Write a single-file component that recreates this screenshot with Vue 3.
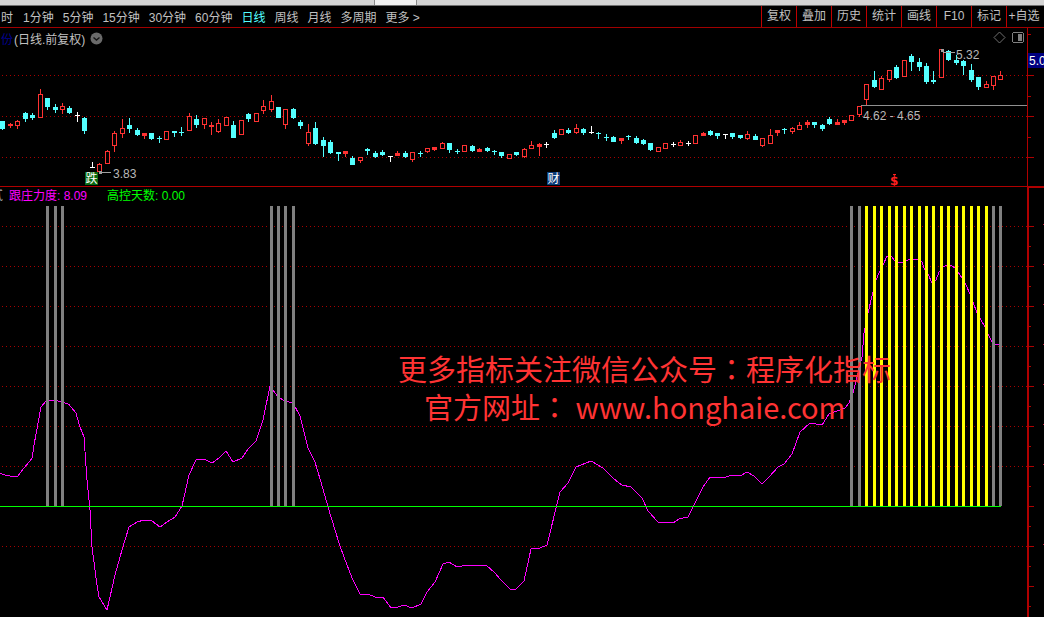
<template>
  <div class="screen">
    <div class="strip">
      <span class="strip-tab"></span>
    </div>
    <div class="toolbar">
      <div class="periods">
        <span v-for="p in periods" :key="p" class="period" :class="{ active: p === '日线' }">{{ p }}</span>
      </div>
      <div class="tools">
        <span v-for="t in tools" :key="t" class="tool">{{ t }}</span>
      </div>
    </div>
    <div class="charts">
      <svg class="chart" viewBox="0 28 1044 589" width="1044" height="589" shape-rendering="crispEdges">
        <defs>
          <pattern id="dots" x="2" y="0" width="4" height="1" patternUnits="userSpaceOnUse">
            <rect x="0" y="0" width="1" height="1" fill="#a80000" />
          </pattern>
        </defs>

        <!-- grid -->
        <rect v-for="y in upperGrid" :key="'u' + y" x="0" :y="y" width="1027" height="1" fill="url(#dots)" />
        <rect v-for="y in lowerGrid" :key="'l' + y" x="0" :y="y" width="1027" height="1" fill="url(#dots)" />

        <!-- candles -->
        <g v-for="(c, i) in candles" :key="i">
          <rect :x="c[0]" :y="c[4]" width="1" :height="c[5] - c[4] + 1" :fill="colors[c[1]]" />
          <rect v-if="c[1] === 'r' && c[3] - c[2] > 2" :x="c[0] - 1.5" :y="c[2] + 0.5" width="4" :height="c[3] - c[2]" fill="#000" stroke="#ff3232" />
          <rect v-else :x="c[0] - 2" :y="c[2]" width="5" :height="c[3] - c[2] + 1" :fill="colors[c[1]]" />
        </g>

        <!-- price marks -->
        <rect x="861" y="105" width="166" height="1" fill="#909090" />
        <rect x="101" y="172" width="10" height="1" fill="#a0a0a0" />
        <rect x="99" y="171" width="3" height="3" fill="#a0a0a0" />
        <rect x="943" y="52" width="12" height="1" fill="#a0a0a0" />
        <rect x="941" y="49" width="3" height="3" fill="#a0a0a0" />
        <text x="113" y="178" class="price">3.83</text>
        <text x="956" y="59" class="price">5.32</text>
        <text x="863" y="120" class="price">4.62 - 4.65</text>

        <!-- event badges -->
        <rect x="85" y="172" width="13" height="13" fill="#0a6a12" />
        <text x="85.5" y="183" class="badge">跌</text>
        <rect x="547" y="172" width="13" height="13" fill="#0b3c78" />
        <text x="547.5" y="183" class="badge">财</text>
        <text x="890" y="185" class="dollar">$</text>
        <rect x="893" y="174" width="3" height="1" fill="#ff2020" />

        <!-- corner icons -->
        <polygon points="999.5,32 1005,37.5 999.5,43 994,37.5" fill="none" stroke="#707070" shape-rendering="auto" />
        <rect x="1012.5" y="32.5" width="11" height="10" rx="2" fill="none" stroke="#808080" />
        <rect x="1018" y="34" width="4" height="7" fill="#808080" />

        <!-- indicator line, the bars sit on it -->
        <polyline :points="linePoints" fill="none" stroke="#ff00ff" />
        <rect v-for="x in grayBars" :key="'g' + x" :x="x" y="206" width="3" height="300" fill="#808080" />
        <rect v-for="x in yellowBars" :key="'y' + x" :x="x" y="206" width="3" height="300" fill="#ffff00" />
        <rect x="0" y="506" width="1001" height="1" fill="#00ff00" />

        <!-- frame and axis -->
        <rect x="0" y="186" width="1044" height="1" fill="#b00000" />
        <rect x="1028" y="187" width="16" height="1" fill="#b00000" />
        <rect x="1027" y="28" width="1" height="159" fill="#b00000" />
        <rect x="1027" y="187" width="2" height="430" fill="#b00000" />
        <rect v-for="y in majorTicks" :key="'t' + y" x="1028" :y="y" width="6" height="1" fill="#b00000" />
        <rect v-for="y in minorTicks" :key="'m' + y" x="1028" :y="y" width="3" height="1" fill="#b00000" />
        <rect v-for="y in lowerGrid" :key="'d' + y" x="1043" :y="y - 2" width="1" height="1" fill="#c02040" />

        <!-- current price tag -->
        <rect x="1028" y="53" width="16" height="15" fill="#000080" />
        <text x="1029" y="65" class="tag">5.00</text>
      </svg>

      <div class="title">
        <span class="code">份</span>
        <span>(日线.前复权)</span>
        <svg class="chevron" width="13" height="13" viewBox="0 0 13 13">
          <circle cx="6.5" cy="6.5" r="6" fill="#6a6a6a" />
          <path d="M3.5 5.5 L6.5 8 L9.5 5.5" fill="none" stroke="#151515" stroke-width="1.4" />
        </svg>
      </div>

      <div class="legend">
        <span class="cut">贰</span>
        <span class="magenta">跟庄力度: 8.09</span>
        <span class="green">高控天数: 0.00</span>
      </div>

      <div class="watermark">
        <div class="wm-one">更多指标关注微信公众号<span class="colon">：</span>程序化指标</div>
        <div class="wm-two">官方网址<span class="colon">：</span> www.honghaie.com</div>
      </div>
    </div>
  </div>
</template>

<script setup>
const periods = ['时', '1分钟', '5分钟', '15分钟', '30分钟', '60分钟', '日线', '周线', '月线', '多周期', '更多 >']
const tools = ['复权', '叠加', '历史', '统计', '画线', 'F10', '标记', '+自选']

const colors = { r: '#ff3232', c: '#54ffff', w: '#ffffff' }

const upperGrid = [75, 116, 157]
const lowerGrid = [226, 266, 306, 346, 386, 426, 466, 546]
const majorTicks = [75, 116, 157, 226, 266, 306, 346, 386, 426, 466, 506, 546, 586]
const minorTicks = [34, 55, 96, 137, 246, 286, 326, 366, 406, 446, 486, 526, 566, 606]

const grayBars = [46, 54, 61, 270, 277, 284, 292, 850, 858, 992, 999]
const yellowBars = [865, 873, 880, 888, 895, 903, 910, 918, 925, 932, 940, 947, 955, 962, 970, 977, 985]

// x, kind, body top, body bottom, high, low
const candles = [
  [2, 'c', 121, 128, 121, 129], [10, 'r', 124, 125, 123, 127], [17, 'r', 121, 125, 120, 128],
  [25, 'c', 113, 118, 112, 121], [32, 'c', 115, 117, 113, 119], [40, 'r', 94, 117, 89, 117],
  [47, 'c', 98, 106, 98, 109], [55, 'c', 107, 109, 104, 112], [62, 'r', 106, 109, 103, 113],
  [69, 'c', 108, 112, 106, 113], [77, 'w', 115, 115, 112, 121], [84, 'c', 118, 130, 117, 133],
  [92, 'w', 167, 167, 162, 167], [99, 'r', 164, 171, 163, 171], [107, 'r', 151, 163, 150, 163],
  [114, 'r', 133, 145, 131, 151], [122, 'r', 128, 133, 119, 137], [129, 'c', 125, 128, 118, 132],
  [137, 'c', 130, 134, 128, 135], [144, 'r', 133, 135, 133, 138], [151, 'c', 133, 138, 133, 139],
  [159, 'c', 138, 138, 136, 142], [166, 'r', 131, 139, 131, 139], [174, 'c', 131, 132, 131, 136],
  [181, 'c', 132, 132, 127, 135], [189, 'r', 116, 130, 113, 130], [196, 'c', 119, 124, 115, 127],
  [204, 'r', 118, 124, 118, 128], [211, 'r', 125, 126, 122, 134], [218, 'r', 123, 131, 119, 132],
  [226, 'r', 117, 125, 117, 125], [233, 'c', 125, 137, 121, 137], [241, 'r', 120, 134, 120, 134],
  [248, 'c', 114, 118, 113, 121], [256, 'r', 113, 121, 113, 121], [263, 'r', 106, 110, 100, 113],
  [271, 'r', 101, 109, 95, 111], [278, 'c', 107, 117, 107, 117], [285, 'r', 109, 124, 109, 128],
  [293, 'c', 109, 117, 108, 118], [300, 'c', 122, 125, 120, 128], [308, 'r', 132, 143, 124, 145],
  [315, 'c', 128, 143, 122, 144], [323, 'c', 140, 145, 137, 156], [330, 'c', 142, 152, 140, 153],
  [338, 'c', 152, 153, 152, 160], [345, 'r', 151, 153, 151, 156], [352, 'c', 158, 164, 156, 164],
  [360, 'r', 157, 160, 157, 162], [367, 'c', 149, 150, 148, 154], [375, 'c', 153, 156, 151, 157],
  [382, 'c', 152, 154, 150, 155], [390, 'w', 156, 156, 156, 161], [397, 'r', 153, 155, 151, 155],
  [405, 'c', 153, 156, 151, 157], [412, 'r', 152, 159, 152, 161], [420, 'c', 153, 153, 151, 156],
  [427, 'r', 148, 151, 148, 152], [434, 'r', 147, 149, 147, 150], [442, 'r', 143, 148, 142, 148],
  [449, 'c', 143, 149, 143, 152], [457, 'c', 151, 151, 149, 153], [464, 'r', 145, 151, 145, 151],
  [472, 'c', 146, 150, 145, 151], [479, 'r', 149, 151, 148, 151], [487, 'c', 148, 150, 147, 151],
  [494, 'c', 151, 151, 150, 154], [501, 'c', 152, 155, 152, 157], [509, 'r', 154, 158, 154, 158],
  [516, 'c', 152, 154, 152, 155], [524, 'r', 149, 156, 148, 157], [531, 'r', 145, 148, 141, 148],
  [539, 'r', 144, 146, 143, 155], [546, 'w', 144, 144, 142, 147], [554, 'c', 133, 137, 130, 138],
  [561, 'r', 129, 134, 129, 134], [568, 'c', 130, 132, 128, 133], [576, 'r', 128, 132, 124, 133],
  [583, 'c', 129, 132, 128, 134], [591, 'w', 132, 132, 126, 133], [598, 'c', 133, 133, 132, 138],
  [606, 'c', 137, 137, 134, 140], [613, 'c', 137, 141, 136, 141], [621, 'r', 138, 140, 138, 143],
  [628, 'c', 136, 136, 135, 139], [636, 'c', 138, 142, 136, 143], [643, 'c', 140, 143, 139, 144],
  [650, 'c', 143, 149, 143, 150], [658, 'r', 147, 151, 147, 151], [665, 'r', 143, 148, 143, 148],
  [673, 'w', 144, 144, 142, 146], [680, 'r', 142, 145, 140, 145], [688, 'w', 143, 143, 141, 145],
  [695, 'r', 135, 143, 135, 143], [703, 'r', 133, 135, 132, 135], [710, 'c', 131, 134, 130, 135],
  [717, 'c', 133, 135, 133, 138], [725, 'w', 134, 134, 134, 138], [732, 'c', 133, 136, 133, 138],
  [740, 'c', 135, 137, 135, 138], [747, 'r', 134, 138, 131, 139], [755, 'c', 136, 139, 134, 139],
  [762, 'r', 138, 145, 138, 146], [770, 'r', 135, 143, 129, 143], [777, 'r', 130, 132, 130, 135],
  [784, 'c', 129, 129, 128, 133], [792, 'r', 128, 131, 127, 133], [799, 'r', 125, 129, 122, 129],
  [807, 'r', 122, 124, 120, 127], [814, 'c', 122, 124, 122, 127], [822, 'c', 125, 128, 124, 130],
  [829, 'c', 119, 123, 117, 124], [837, 'r', 122, 124, 119, 124], [844, 'r', 120, 122, 120, 124],
  [851, 'r', 115, 120, 115, 120], [859, 'r', 106, 114, 106, 116], [866, 'r', 84, 99, 84, 104],
  [874, 'c', 80, 86, 71, 87], [881, 'r', 78, 89, 76, 89], [889, 'r', 70, 79, 70, 81],
  [896, 'c', 67, 77, 65, 78], [904, 'r', 60, 76, 60, 76], [911, 'c', 56, 61, 54, 70],
  [919, 'c', 62, 66, 58, 70], [926, 'c', 66, 81, 63, 83], [933, 'c', 80, 81, 71, 83],
  [941, 'r', 49, 77, 49, 77], [948, 'c', 51, 59, 50, 60], [956, 'c', 60, 62, 55, 64],
  [963, 'c', 61, 65, 60, 74], [971, 'c', 70, 79, 64, 81], [978, 'c', 77, 86, 77, 89],
  [986, 'r', 84, 87, 81, 87], [993, 'r', 76, 85, 76, 89], [1000, 'r', 75, 79, 71, 79]
]

const linePoints = [
  [0, 473.5], [5, 475], [12, 476.5], [17, 477], [24, 468], [32, 458.5], [34, 445], [41, 407], [46, 401], [50, 400],
  [58, 401], [62, 402], [69, 404.5], [76, 413], [80, 427], [84, 437], [87, 480], [90, 510], [92, 547], [97, 585],
  [99, 597], [107, 610], [115, 575], [122, 550], [129, 527], [137, 522], [144, 520], [152, 521], [160, 527], [167, 522],
  [175, 517], [182, 506], [189, 475], [196, 460], [204, 459], [212, 463], [219, 458], [226, 451], [233, 462], [242, 458],
  [248, 449], [256, 441], [263, 420], [270, 386], [278, 397], [285, 401], [293, 403], [300, 416], [308, 448], [315, 462],
  [323, 489], [328, 507], [339, 543], [344, 557], [352, 578], [360, 594], [368, 594], [375, 597], [383, 597], [391, 608],
  [398, 607], [404, 605], [412, 608], [421, 604], [427, 592], [435, 582], [443, 564], [449, 562], [457, 567], [468, 565],
  [487, 566], [494, 572], [501, 580], [510, 589], [515, 590], [524, 581], [531, 549], [540, 548], [547, 545], [560, 492],
  [568, 483], [576, 467], [591, 461], [603, 468], [614, 479], [622, 485], [631, 487], [642, 498], [648, 511], [658, 522],
  [673, 523], [679, 519], [688, 517], [703, 487], [710, 477], [726, 477], [732, 475], [740, 476], [747, 472], [754, 476],
  [762, 484], [769, 477], [778, 467], [784, 464], [792, 454], [800, 432], [810, 423], [822, 425], [829, 414], [845, 408],
  [849, 403], [853, 393], [862, 357], [864, 333], [868, 313], [873, 292], [876, 280], [879, 273], [883, 265], [887, 256],
  [891, 256], [895, 261], [898, 262], [903, 262], [908, 260], [917, 259], [922, 262], [924, 268], [928, 274], [932, 283],
  [936, 280], [939, 272], [943, 267], [947, 265], [951, 265], [955, 268], [958, 272], [962, 278], [966, 285], [970, 294],
  [973, 302], [977, 313], [981, 320], [985, 327], [988, 334], [992, 342], [995, 344], [999, 344]
].map(p => p.join(',')).join(' ')
</script>

<style scoped>
.screen { width:1044px; height:617px; background:#000; overflow:hidden; display:flex; flex-direction:column; font-family:"Liberation Sans","Noto Sans CJK SC",sans-serif; font-size:12px; color:#c0c0c0; }
.strip { height:5px; background:#d4d4d4; border-bottom:1px solid #707070; display:flex; justify-content:flex-end; }
.strip-tab { width:41px; height:5px; margin-right:627px; background:#f0f0f0; border-left:1px solid #8a8a8a; border-right:1px solid #8a8a8a; }
.toolbar { height:21px; display:flex; justify-content:space-between; border-bottom:1px solid #a00000; }
.periods { display:flex; align-items:center; gap:9px; padding-left:1px; }
.period { white-space:nowrap; }
.period:first-child { margin-right:1px; }
.period.active { color:#54ffff; }
.tools { display:flex; padding-right:3px; }
.tool { width:35px; box-sizing:border-box; border-left:1px solid #c00000; text-align:center; line-height:21px; white-space:nowrap; }
.charts { position:relative; flex:1; }
.chart { display:block; }
.price { font-family:"Liberation Sans",sans-serif; font-size:12px; fill:#b8b8b8; }
.badge { font-family:"Noto Sans CJK SC",sans-serif; font-size:12px; fill:#fff; }
.dollar { font-family:"DejaVu Sans",sans-serif; font-size:12px; font-weight:bold; fill:#ff2020; }
.tag { font-family:"Liberation Sans",sans-serif; font-size:12px; fill:#fff; }
.title { position:absolute; left:1px; top:3px; display:flex; align-items:center; height:14px; white-space:nowrap; }
.code { color:#000090; margin-right:1px; }
.chevron { margin-left:5px; }
.legend { position:absolute; left:-9px; top:159px; display:flex; white-space:nowrap; height:14px; align-items:center; }
.cut { width:18px; color:#a0a0a0; }
.magenta { color:#ff00ff; width:98px; }
.green { color:#00ff00; }
.watermark { position:absolute; left:0; top:321px; width:1044px; color:#ff3333; font-family:"Noto Sans CJK SC",sans-serif; white-space:nowrap; }
.colon { font-family:"Noto Sans CJK TC",sans-serif; }
.wm-one { margin-left:398px; font-size:29px; line-height:38px; }
.wm-two { margin-left:424px; font-size:29px; line-height:38px; }
</style>
